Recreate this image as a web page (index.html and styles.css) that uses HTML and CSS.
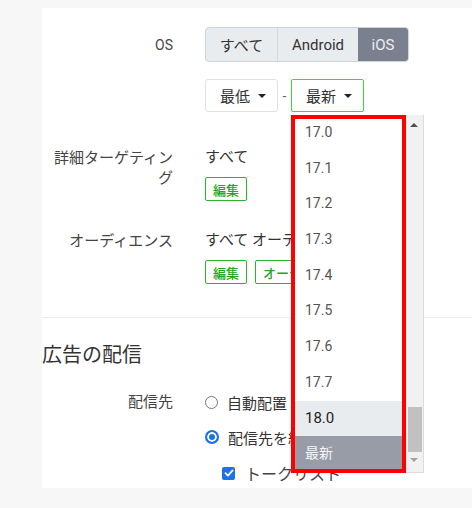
FILE: index.html
```html
<!DOCTYPE html>
<html lang="ja">
<head>
<meta charset="utf-8">
<link rel="stylesheet" href="styles.css">
</head>
<body>
<div class="card">
  <div class="row row-os">
    <div class="label">OS</div>
    <div class="content">
      <div class="seg">
        <span class="seg-btn seg-all">すべて</span>
        <span class="seg-btn seg-android">Android</span>
        <span class="seg-btn seg-ios active">iOS</span>
      </div>
    </div>
  </div>

  <div class="row row-version">
    <div class="label"></div>
    <div class="content version">
      <span class="sel">最低 <i class="caret"></i></span>
      <span class="dash">-</span>
      <span class="sel sel-open">最新 <i class="caret"></i></span>
      <div class="dropdown">
        <div class="list">
          <div class="items">
            <div class="item">17.0</div>
            <div class="item">17.1</div>
            <div class="item">17.2</div>
            <div class="item">17.3</div>
            <div class="item">17.4</div>
            <div class="item">17.5</div>
            <div class="item">17.6</div>
            <div class="item">17.7</div>
            <div class="item hover">18.0</div>
            <div class="item selected">最新</div>
          </div>
        </div>
        <div class="scrollbar">
          <i class="arr arr-up"></i>
          <div class="thumb"></div>
          <i class="arr arr-down"></i>
        </div>
      </div>
    </div>
  </div>

  <div class="row row-target">
    <div class="label">詳細ターゲティン<br>グ</div>
    <div class="content">
      <div class="text">すべて</div>
      <div class="badges"><span class="badge">編集</span></div>
    </div>
  </div>

  <div class="row row-audience">
    <div class="label">オーディエンス</div>
    <div class="content">
      <div class="text">すべて オーディエンス</div>
      <div class="badges"><span class="badge">編集</span><span class="badge">オーディエンスを作成</span></div>
    </div>
  </div>

  <hr class="divider">

  <h2 class="heading">広告の配信</h2>

  <div class="row row-place">
    <div class="label">配信先</div>
    <div class="content">
      <div class="opt"><span class="radio"></span>自動配置</div>
    </div>
  </div>
  <div class="row row-place2">
    <div class="label"></div>
    <div class="content">
      <div class="opt"><span class="radio checked"></span>配信先を絞り込む</div>
    </div>
  </div>
  <div class="row row-check">
    <div class="label"></div>
    <div class="content">
      <div class="opt sub"><span class="checkbox"><svg width="10" height="10" viewBox="0 0 10 10"><path d="M1.5 5.2 L4 7.6 L8.6 2.4" fill="none" stroke="#fff" stroke-width="1.8" stroke-linecap="round" stroke-linejoin="round"/></svg></span>トークリスト</div>
    </div>
  </div>
</div>
</body>
</html>
```

FILE: styles.css
```css
* { box-sizing: border-box; }
html, body { margin: 0; padding: 0; }
body {
  background: #f7f7f7;
  font-family: Roboto, "Noto Sans CJK JP", sans-serif;
  color: #444;
  width: 472px;
  height: 508px;
  overflow: hidden;
}
.card {
  margin: 8px 0 0 42px;
  height: 480px;
  background: #fff;
  padding-top: 19px;
  overflow: hidden;
}
.row { display: flex; }
.label {
  width: 131px;
  flex: none;
  text-align: right;
  font-size: 15px;
  line-height: 20px;
  color: #444;
}
.content { margin-left: 32px; flex: 1; font-size: 15px; min-width: 0; }

/* OS segmented */
.row-os { height: 35px; align-items: center; }
.row-os .label { font-size: 14px; color: #444; }
.seg {
  display: inline-flex;
  height: 35px;
  border: 1px solid #ced4da;
  border-radius: 4px;
  background: #e9ecef;
  overflow: hidden;
}
.seg-btn {
  display: flex;
  align-items: center;
  justify-content: center;
  font-size: 15px;
  color: #333;
}
.seg-all { width: 72px; border-right: 1px solid #d5d9de; }
.seg-android { width: 80px; }
.seg-ios { width: 50px; }
.seg-btn.active { background: #7a808e; color: #eceef2; }

/* version selects */
.row-version { margin-top: 17px; height: 33px; }
.version { display: flex; align-items: center; position: relative; }
.sel {
  display: inline-flex;
  align-items: center;
  width: 73px;
  height: 33px;
  padding-left: 14px;
  border: 1px solid #dee2e6;
  border-radius: 3px;
  background: #fff;
  font-size: 15px;
  color: #333;
}
.caret {
  display: inline-block;
  margin-left: 8px;
  width: 0; height: 0;
  border-left: 4px solid transparent;
  border-right: 4px solid transparent;
  border-top: 4px solid #222;
}
.dash { width: 13px; text-align: center; color: #666; font-size: 14px; }
.sel-open { border: 1.5px solid #45cf45; border-radius: 2px; }

.dropdown {
  position: absolute;
  left: 86px;
  top: 36px;
  display: flex;
  z-index: 5;
}
.list {
  width: 115px;
  height: 358px;
  border: 4px solid #ff0000;
  background: #fff;
  overflow: hidden;
}
.items { margin-top: -4px; }
.item {
  height: 35.7px;
  line-height: 35.7px;
  padding-left: 10px;
  font-size: 14px;
  color: #555;
}
.item.hover { background: #e9ecef; color: #222; font-size: 15px; }
.item.selected { background: #979ca7; color: #f4f5f7; }
.scrollbar {
  position: relative;
  width: 18px;
  height: 358px;
  background: #f1f1f1;
  border-right: 1px solid #dcdcdc;
  border-bottom: 1px solid #dcdcdc;
}
.arr {
  position: absolute;
  left: 4px;
  width: 0; height: 0;
  border-left: 4px solid transparent;
  border-right: 4px solid transparent;
}
.arr-up { top: 8px; border-bottom: 4px solid #505050; }
.arr-down { bottom: 10px; border-top: 4px solid #a3a3a3; }
.thumb {
  position: absolute;
  left: 2px;
  right: 1px;
  top: 292px;
  height: 45px;
  background: #c1c1c1;
}

/* targeting */
.row-target { margin-top: 36px; }
.text { line-height: 20px; color: #333; margin-top: -1px; white-space: nowrap; }
.badges { display: flex; gap: 8px; margin-top: 10px; white-space: nowrap; }
.badge {
  display: inline-flex;
  align-items: center;
  flex: none;
  height: 24px;
  padding: 0 7px;
  border: 1.5px solid #28b428;
  border-radius: 2px;
  color: #20a820;
  font-size: 13px;
  font-weight: 500;
}
.row-audience { margin-top: 30px; }

.divider {
  margin: 33px 0 0 0;
  border: 0;
  border-top: 1px solid #eeeeee;
  height: 0;
}
.heading {
  margin: 23px 0 0 0;
  font-size: 20px;
  line-height: 28px;
  font-weight: 400;
  color: #333;
}

.row-place { margin-top: 22px; }
.row-place .label { line-height: 22px; }
.opt {
  display: flex;
  align-items: center;
  height: 22px;
  color: #333;
  font-size: 15px;
  white-space: nowrap;
}
.radio {
  width: 13px; height: 13px;
  border: 1px solid #767676;
  border-radius: 50%;
  margin-right: 9px;
  flex: none;
  background: #fff;
}
.radio.checked {
  border: 2px solid #1a73e8;
  box-shadow: inset 0 0 0 2px #fff;
  background: #1a73e8;
  width: 14px; height: 14px;
}
.row-place2 { margin-top: 13px; }
.row-check { margin-top: 14px; }
.opt.sub { padding-left: 17px; font-size: 16px; color: #444; }
.checkbox {
  width: 13px; height: 13px;
  border-radius: 2px;
  background: #1a73e8;
  margin-right: 10px;
  display: flex;
  align-items: center;
  justify-content: center;
  flex: none;
}
```
